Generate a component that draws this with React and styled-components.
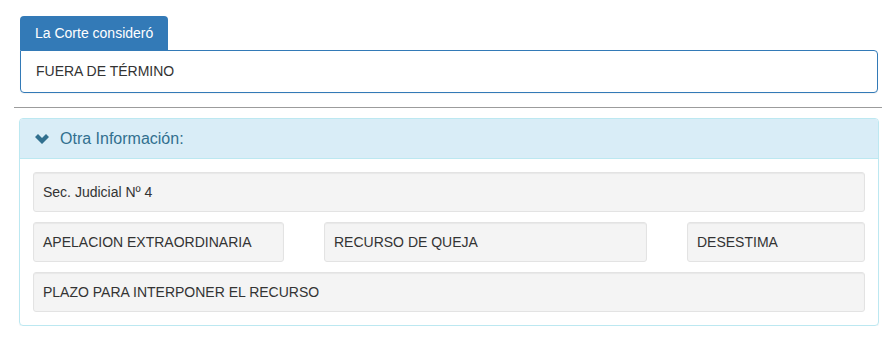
import React from "react";
import styled, { createGlobalStyle } from "styled-components";

const GlobalStyle = createGlobalStyle`
  html, body {
    margin: 0;
    padding: 0;
    background: #ffffff;
  }
  body {
    font-family: "Liberation Sans", Arial, Helvetica, sans-serif;
    font-size: 14px;
    line-height: 20px;
    color: #333333;
  }
  * { box-sizing: border-box; }
`;

const Page = styled.div`
  padding: 16px 0 0 14px;
`;

const Decision = styled.section`
  padding: 0 4px 0 6px;
`;

const Tab = styled.div`
  display: inline-block;
  background: #337ab7;
  color: #ffffff;
  padding: 7px 15px;
  line-height: 20px;
  border-radius: 4px 4px 0 0;
`;

const DecisionBox = styled.div`
  border: 1px solid #337ab7;
  border-radius: 0 4px 4px 4px;
  padding: 10px 15px 11px;
  line-height: 20px;
  box-shadow: 0 1px 1px rgba(0, 0, 0, 0.05);
`;

const Rule = styled.hr`
  margin: 14px 0 10px;
  border: 0;
  border-top: 1px solid #9c9c9c;
  height: 0;
`;

const Panel = styled.section`
  margin: 0 3px 0 5px;
  border: 1px solid #bce8f1;
  border-radius: 4px;
  box-shadow: 0 1px 1px rgba(0, 0, 0, 0.05);
  overflow: hidden;
`;

const PanelHeading = styled.div`
  display: flex;
  align-items: center;
  gap: 11px;
  padding: 10px 15px;
  background: #d9edf7;
  border-bottom: 1px solid #bce8f1;
  color: #31708f;
  font-size: 16px;
  line-height: 19px;
`;

const Chevron = styled.svg`
  width: 14px;
  height: 10px;
  flex: none;
  fill: #31708f;
`;

const PanelBody = styled.div`
  display: flex;
  flex-direction: column;
  gap: 10px;
  padding: 13px;
`;

const Row = styled.div`
  display: grid;
  grid-template-columns: ${(p) => p.$cols || "1fr"};
  column-gap: 40px;
`;

const Field = styled.div`
  background: #f4f4f4;
  border: 1px solid #e3e3e3;
  border-radius: 3px;
  box-shadow: inset 0 1px 1px rgba(0, 0, 0, 0.05);
  padding: 9px;
  line-height: 20px;
  color: #333333;
  white-space: nowrap;
  overflow: hidden;
`;

export default function App() {
  return (
    <>
      <GlobalStyle />
      <Page>
        <Decision>
          <Tab>La Corte consideró</Tab>
          <DecisionBox>FUERA DE TÉRMINO</DecisionBox>
        </Decision>
        <Rule />
        <Panel>
          <PanelHeading>
            <Chevron viewBox="0 0 14 10" aria-hidden="true">
              <polygon points="0,3 3,0 7,4 11,0 14,3 7,10" />
            </Chevron>
            <span>Otra Información:</span>
          </PanelHeading>
          <PanelBody>
            <Row>
              <Field>Sec. Judicial Nº 4</Field>
            </Row>
            <Row $cols="251fr 323fr 178fr">
              <Field>APELACION EXTRAORDINARIA</Field>
              <Field>RECURSO DE QUEJA</Field>
              <Field>DESESTIMA</Field>
            </Row>
            <Row>
              <Field>PLAZO PARA INTERPONER EL RECURSO</Field>
            </Row>
          </PanelBody>
        </Panel>
      </Page>
    </>
  );
}
